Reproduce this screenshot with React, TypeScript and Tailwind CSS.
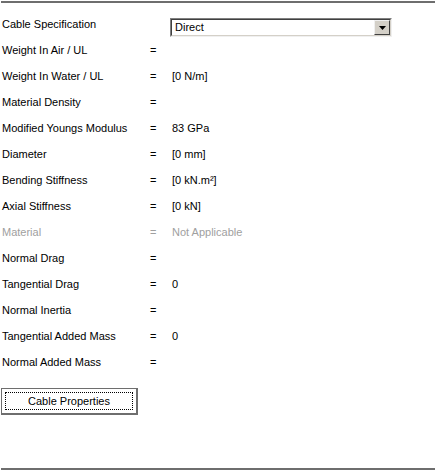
import React from 'react';

const rows = [
  { label: 'Weight In Air / UL', value: '' },
  { label: 'Weight In Water / UL', value: '[0 N/m]' },
  { label: 'Material Density', value: '' },
  { label: 'Modified Youngs Modulus', value: '83 GPa' },
  { label: 'Diameter', value: '[0 mm]' },
  { label: 'Bending Stiffness', value: '[0 kN.m²]' },
  { label: 'Axial Stiffness', value: '[0 kN]' },
  { label: 'Material', value: 'Not Applicable', disabled: true },
  { label: 'Normal Drag', value: '' },
  { label: 'Tangential Drag', value: '0' },
  { label: 'Normal Inertia', value: '' },
  { label: 'Tangential Added Mass', value: '0' },
  { label: 'Normal Added Mass', value: '' },
];

export default function App() {
  return (
    <div
      className="w-[436px] h-[472px] bg-white text-black text-[11px] flex flex-col"
      style={{ fontFamily: '"Liberation Sans", Arial, sans-serif' }}
    >
      {/* top rule */}
      <div className="mt-px mx-px h-[2px] bg-[#6e6e6e]" />

      <div className="mt-[8px]">
        {/* Cable spec row */}
        <div className="h-[26px] flex items-center">
          <div className="w-[170px] pl-[2px]">Cable Specification</div>
          <div className="self-start mt-[7px] w-[222px] h-[19px] flex border border-t-[#808080] border-l-[#808080] border-r-[#f0f0f0] border-b-[#f0f0f0]">
            <div className="flex-1 flex items-center border border-t-[#404040] border-l-[#404040] border-r-[#d4d0c8] border-b-[#d4d0c8] bg-white">
              <span className="pl-[3px]">Direct</span>
              <div className="ml-auto w-[16px] h-full flex items-center justify-center bg-[#d4d0c8] border border-t-[#f0f0f0] border-l-[#f0f0f0] border-r-[#404040] border-b-[#404040]">
                <svg width="7" height="4" viewBox="0 0 7 4">
                  <path d="M0 0h7L3.5 4z" fill="#000" />
                </svg>
              </div>
            </div>
          </div>
        </div>

        {rows.map((r) => (
          <div
            key={r.label}
            className={`h-[26px] flex items-center ${r.disabled ? 'text-[#a0a0a0]' : ''}`}
          >
            <div className="w-[148px] pl-[2px]">{r.label}</div>
            <div className="w-[24px] pl-[2px]">=</div>
            <div>{r.value}</div>
          </div>
        ))}
      </div>

      {/* Cable Properties button */}
      <div className="mt-[13px] ml-px w-[137px] h-[27px] border border-[#6e6e6e] border-r-2 border-b-2 bg-white p-[3px]">
        <div className="h-full border border-dotted border-black flex items-center justify-center">
          Cable Properties
        </div>
      </div>

      {/* bottom rule */}
      <div className="mt-auto mb-[2px] mx-px h-[2px] bg-[#6e6e6e]" />
    </div>
  );
}
